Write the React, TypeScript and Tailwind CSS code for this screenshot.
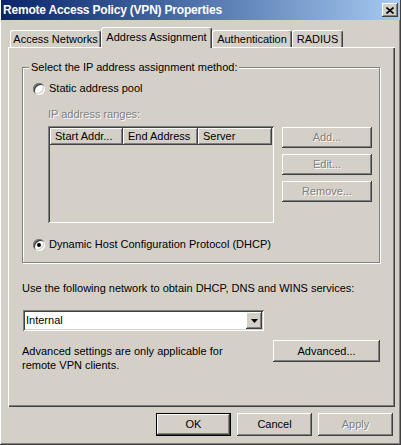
import React from "react";

const raised =
  "shadow-[inset_-1px_-1px_#404040,inset_1px_1px_#ffffff,inset_-2px_-2px_#808080,inset_2px_2px_#d4d0c8]";
const sunken =
  "shadow-[inset_1px_1px_#808080,inset_-1px_-1px_#ffffff,inset_2px_2px_#404040,inset_-2px_-2px_#d4d0c8]";
const disabledText = "text-[#808080] [text-shadow:1px_1px_0_#ffffff]";

function Radio({ checked, label }: { checked?: boolean; label: string }) {
  return (
    <div className="flex h-[13px] items-center gap-[4px]">
      <div
        className={`flex h-[12px] w-[12px] items-center justify-center rounded-full bg-white ${sunken}`}
      >
        {checked && <div className="h-[4px] w-[4px] rounded-full bg-black" />}
      </div>
      <span>{label}</span>
    </div>
  );
}

function Button({
  label,
  disabled,
  isDefault,
  className = "",
}: {
  label: string;
  disabled?: boolean;
  isDefault?: boolean;
  className?: string;
}) {
  if (isDefault) {
    return (
      <div className={`flex border border-black bg-[#d4d0c8] ${className}`}>
        <div className={`flex flex-1 items-center justify-center ${raised}`}>{label}</div>
      </div>
    );
  }
  return (
    <div
      className={`flex items-center justify-center bg-[#d4d0c8] ${raised} ${
        disabled ? disabledText : ""
      } ${className}`}
    >
      {label}
    </div>
  );
}

function Tab({ label, active, w }: { label: string; active?: boolean; w: string }) {
  return (
    <div
      className={`flex items-center justify-center rounded-t-[3px] border-l border-t border-r border-l-white border-t-white border-r-[#404040] bg-[#d4d0c8] shadow-[inset_-1px_0_#808080] ${w} ${
        active ? "relative z-10 -mb-px h-[21px] pb-[2px]" : "h-[17px]"
      }`}
    >
      {label}
    </div>
  );
}

export default function App() {
  return (
    <div
      className={`flex h-[445px] w-[401px] flex-col bg-[#d4d0c8] px-[1px] text-[11px] leading-[13px] text-black ${raised}`}
      style={{ fontFamily: '"Liberation Sans", Arial, sans-serif' }}
    >
      {/* title bar */}
      <div className="flex h-[20px] items-center justify-between bg-gradient-to-r from-[#0a246a] to-[#a6caf0] pl-[2px] pr-[2px]">
        <span className="text-[12px] font-bold tracking-[-0.2px] text-white">
          Remote Access Policy (VPN) Properties
        </span>
        <div className={`flex h-[14px] w-[16px] items-center justify-center bg-[#d4d0c8] ${raised}`}>
          <svg width="8" height="7" viewBox="0 0 8 7">
            <path d="M0.5 0.5 L7.5 6.5 M7.5 0.5 L0.5 6.5" stroke="#000" strokeWidth="1.6" />
          </svg>
        </div>
      </div>

      <div className="flex flex-1 flex-col px-[7px]">
        {/* tabs */}
        <div className="flex items-end pl-[2px] pt-[7px]">
          <Tab label="Access Networks" w="w-[91px]" />
          <Tab label="Address Assignment" w="w-[111px]" active />
          <Tab label="Authentication" w="w-[80px]" />
          <Tab label="RADIUS" w="w-[51px]" />
        </div>

        {/* tab page */}
        <div
          className={`flex h-[360px] w-[387px] flex-col pl-[14px] pt-[20px] shadow-[inset_1px_1px_#ffffff,inset_-1px_-1px_#404040,inset_-2px_-2px_#808080]`}
        >
          <div className="relative flex w-[358px] flex-col border border-[#808080] pb-[11px] pl-[10px] pt-[14px] shadow-[1px_1px_0_#ffffff,inset_1px_1px_0_#ffffff]">
            <span className="absolute -top-[7px] left-[6px] bg-[#d4d0c8] px-[2px]">
              Select the IP address assignment method:
            </span>
            <Radio label="Static address pool" />
            <span className={`ml-[15px] mt-[13px] ${disabledText}`}>IP address ranges:</span>
            <div className="ml-[15px] mt-[5px] flex gap-[8px]">
              <div className={`flex h-[97px] w-[226px] flex-col p-[2px] ${sunken}`}>
                <div className="flex h-[17px]">
                  <div className={`flex w-[73px] items-center pl-[5px] ${raised}`}>Start Addr...</div>
                  <div className={`flex w-[75px] items-center pl-[5px] ${raised}`}>End Address</div>
                  <div className={`flex flex-1 items-center pl-[5px] ${raised}`}>Server</div>
                </div>
              </div>
              <div className="flex flex-col gap-[6px] pt-[1px]">
                <Button label="Add..." disabled className="h-[21px] w-[90px]" />
                <Button label="Edit..." disabled className="h-[21px] w-[90px]" />
                <Button label="Remove..." disabled className="h-[21px] w-[90px]" />
              </div>
            </div>
            <div className="mt-[15px]">
              <Radio checked label="Dynamic Host Configuration Protocol (DHCP)" />
            </div>
          </div>

          <span className="mt-[19px]">Use the following network to obtain DHCP, DNS and WINS services:</span>

          <div
            className={`ml-[1px] mt-[15px] flex h-[21px] w-[241px] items-center bg-white p-[2px] ${sunken}`}
          >
            <span className="flex-1 pl-[1px]">Internal</span>
            <div className={`flex h-[17px] w-[16px] items-center justify-center bg-[#d4d0c8] ${raised}`}>
              <svg width="7" height="4" viewBox="0 0 7 4">
                <path d="M0 0 H7 L3.5 4 Z" fill="#000" />
              </svg>
            </div>
          </div>

          <div className="mt-[13px] flex w-[358px] items-start justify-between">
            <span className="leading-[14px]">
              Advanced settings are only applicable for
              <br />
              remote VPN clients.
            </span>
            <Button label="Advanced..." className="-mt-[4px] h-[22px] w-[107px]" />
          </div>
        </div>

        {/* dialog buttons */}
        <div className="mt-[6px] flex justify-end gap-[6px]">
          <Button label="OK" isDefault className="h-[23px] w-[75px]" />
          <Button label="Cancel" className="h-[23px] w-[75px]" />
          <Button label="Apply" disabled className="h-[23px] w-[75px]" />
        </div>
      </div>
    </div>
  );
}
